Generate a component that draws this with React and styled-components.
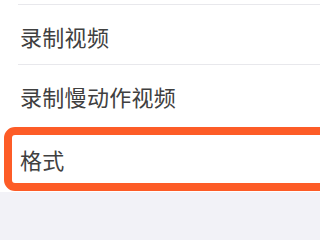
import React from "react";
import styled, { createGlobalStyle } from "styled-components";

const Global = createGlobalStyle`
  html, body { margin: 0; padding: 0; }
  body {
    width: 320px;
    height: 240px;
    overflow: hidden;
    background: #f2f2f7;
    font-family: "Noto Sans CJK SC", "Noto Sans", sans-serif;
  }
`;

const List = styled.div`
  background: #ffffff;
  padding-top: 4px;
  padding-bottom: 4px;
  display: flex;
  flex-direction: column;
  overflow: hidden;
`;

const Row = styled.div`
  position: relative;
  height: ${(p) => p.$h}px;
  display: flex;
  align-items: center;
  padding-left: 20px;
  font-size: 22px;
  color: #404040;
  letter-spacing: 0.3px;
  &::before {
    content: "";
    position: absolute;
    top: 0;
    left: 18px;
    right: 0;
    height: 1px;
    background: ${(p) => (p.$noLine ? "transparent" : "#e8e8ec")};
  }
`;

const Highlight = styled.div`
  position: absolute;
  top: 2px;
  left: 4px;
  right: -24px;
  bottom: -3px;
  border: 8px solid #fd5c27;
  border-radius: 11px;
  pointer-events: none;
`;

const Label = styled.span`
  position: relative;
  top: ${(p) => p.$dy || 0}px;
`;

export default function App() {
  return (
    <>
      <Global />
      <List>
        <Row $h={60}>
          <Label $dy={2}>录制视频</Label>
        </Row>
        <Row $h={61}>
          <Label $dy={1}>录制慢动作视频</Label>
        </Row>
        <Row $h={63} $noLine>
          <Label $dy={2}>格式</Label>
          <Highlight />
        </Row>
      </List>
    </>
  );
}
